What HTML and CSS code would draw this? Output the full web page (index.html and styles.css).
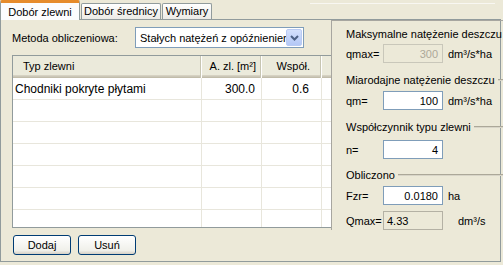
FILE: index.html
```html
<!DOCTYPE html>
<html lang="pl">
<head>
<meta charset="utf-8">
<link rel="stylesheet" href="styles.css">
</head>
<body>
<div class="win">
  <div class="tabs">
    <div class="tab active">Dobór zlewni</div>
    <div class="tab t2">Dobór średnicy</div>
    <div class="tab t3">Wymiary</div>
    <div class="ghost"></div>
  </div>
  <div class="page">
    <div class="left">
      <div class="method">
        <span class="mlabel">Metoda obliczeniowa:</span>
        <div class="combo">
          <span class="combo-text">Stałych natężeń z opóźnieniem</span>
          <span class="combo-btn"><svg width="9" height="6" viewBox="0 0 9 6"><path d="M1 1 L4.5 4.5 L8 1" fill="none" stroke="#4D6185" stroke-width="2"/></svg></span>
        </div>
      </div>
      <div class="grid">
        <div class="row head">
          <div class="c c1">Typ zlewni</div>
          <div class="c c2">A. zl. [m²]</div>
          <div class="c c3">Współ.</div>
          <div class="c c4"></div>
        </div>
        <div class="row body">
          <div class="c c1">Chodniki pokryte płytami</div>
          <div class="c c2">300.0</div>
          <div class="c c3">0.6</div>
          <div class="c c4"></div>
        </div>
        <div class="row"><div class="c c1"></div><div class="c c2"></div><div class="c c3"></div><div class="c c4"></div></div>
        <div class="row"><div class="c c1"></div><div class="c c2"></div><div class="c c3"></div><div class="c c4"></div></div>
        <div class="row"><div class="c c1"></div><div class="c c2"></div><div class="c c3"></div><div class="c c4"></div></div>
        <div class="row"><div class="c c1"></div><div class="c c2"></div><div class="c c3"></div><div class="c c4"></div></div>
        <div class="row"><div class="c c1"></div><div class="c c2"></div><div class="c c3"></div><div class="c c4"></div></div>
        <div class="row"><div class="c c1"></div><div class="c c2"></div><div class="c c3"></div><div class="c c4"></div></div>
      </div>
      <div class="buttons">
        <button class="btn">Dodaj</button>
        <button class="btn">Usuń</button>
      </div>
    </div>
    <div class="right">
      <div class="ghead g1"><span>Maksymalne natężenie deszczu</span><i class="gline"></i></div>
      <div class="frow r1"><span class="flabel">qmax=</span><span class="field disabled">300</span><span class="unit">dm³/s*ha</span></div>
      <div class="ghead g2"><span>Miarodajne natężenie deszczu</span><i class="gline"></i></div>
      <div class="frow r2"><span class="flabel">qm=</span><span class="field">100</span><span class="unit">dm³/s*ha</span></div>
      <div class="ghead g3"><span>Współczynnik typu zlewni</span><i class="gline"></i></div>
      <div class="frow r3"><span class="flabel">n=</span><span class="field">4</span></div>
      <div class="ghead g4"><span>Obliczono</span><i class="gline"></i></div>
      <div class="frow r4"><span class="flabel">Fzr=</span><span class="field">0.0180</span><span class="unit">ha</span></div>
      <div class="frow r5"><span class="flabel">Qmax=</span><span class="field result">4.33</span><span class="unit u2">dm³/s</span></div>
    </div>
  </div>
</div>
</body>
</html>
```
FILE: styles.css
```css
* { box-sizing: border-box; }
html, body { margin: 0; padding: 0; }
body {
  background: #ECE9D8;
  font-family: "Liberation Sans", Arial, sans-serif;
  font-size: 11px;
  color: #000;
}
.win {
  width: 503px;
  height: 265px;
  background: #ECE9D8;
}
.tabs {
  display: flex;
  align-items: flex-start;
  height: 20px;
  position: relative;
  z-index: 2;
}
.tab {
  height: 16px;
  margin-top: 3px;
  border: 1px solid #919B9C;
  border-bottom: none;
  border-radius: 2px 2px 0 0;
  background: linear-gradient(#FFFFFF, #ECEBE6);
  display: flex;
  align-items: center;
  justify-content: center;
  line-height: 13px;
  white-space: nowrap;
}
.tab.active {
  width: 80px;
  height: 20px;
  margin-top: 0;
  background: #FCFCFE;
  border-top: 3px solid #E68B2C;
  padding-top: 1px;
}
.tab.t2 { width: 80px; margin-left: 1px; }
.tab.t3 { width: 50px; margin-left: 1px; }
.ghost {
  width: 185px;
  height: 1px;
  margin: 3px 8px 0 auto;
  background: #F8F7F2;
}
.page {
  width: 501px;
  height: 243px;
  margin-top: -1px;
  border: 1px solid #919B9C;
  background: #ECE9D8;
  display: flex;
}
.left {
  width: 330px;
  padding-left: 11px;
  display: flex;
  flex-direction: column;
}
.method {
  display: flex;
  align-items: center;
  margin-top: 7px;
  height: 21px;
}
.mlabel { width: 123px; }
.combo {
  width: 169px;
  height: 21px;
  border: 1px solid #7F9DB9;
  background: #fff;
  display: flex;
  align-items: center;
  overflow: hidden;
}
.combo-text {
  flex: 1;
  padding-left: 4px;
  white-space: nowrap;
  overflow: hidden;
}
.combo-btn {
  width: 16px;
  height: 17px;
  margin-right: 1px;
  border: 1px solid #B9CBF3;
  border-radius: 2px;
  background: linear-gradient(#D4E0FC, #B4C8F6);
  display: flex;
  align-items: center;
  justify-content: center;
}
.grid {
  margin-top: 7px;
  width: 320px;
  height: 173px;
  border: 1px solid #919B9C;
  background: #fff;
  overflow: hidden;
}
.row {
  display: flex;
  height: 22px;
  border-bottom: 1px solid #E8E6DC;
}
.row.body { font-size: 12px; }
.row.head {
  height: 22px;
  background: #EBEADB;
  border-bottom: none;
  box-shadow: inset 0 -1px 0 #C1BCA9, inset 0 -2px 0 #CBC7B8, inset 0 -3px 0 #D6D2C2;
}
.c {
  height: 100%;
  display: flex;
  align-items: center;
  border-right: 1px solid #E8E6DC;
  white-space: nowrap;
}
.c1 { width: 189px; padding-left: 2px; }
.c2 { width: 60px; justify-content: flex-end; padding-right: 6px; }
.c3 { width: 60px; justify-content: flex-end; padding-right: 12px; }
.c4 { flex: 1; border-right: none; }
.head .c {
  border-right: none;
  position: relative;
  padding-bottom: 3px;
}
.head .c1 { padding-left: 10px; }
.head .c2 { padding-right: 6px; }
.head .c3 { padding-right: 12px; }
.head .c1, .head .c2, .head .c3 {
  box-shadow: inset -1px 0 0 #FFFFFF, inset -2px 0 0 #C7C5B2;
  background-clip: content-box;
}
.buttons {
  display: flex;
  gap: 7px;
  margin-top: 7px;
  padding-left: 1px;
}
.btn {
  width: 58px;
  height: 20px;
  border: 1px solid #003C74;
  border-radius: 3px;
  background: linear-gradient(#FFFFFF, #F0F0EA 80%, #D6D0C5);
  font-family: "Liberation Sans", Arial, sans-serif;
  font-size: 11px;
  color: #000;
  padding: 0;
}
.right {
  flex: 1;
  height: 210px;
  border-left: 1px solid #A7A6A0;
  border-top: 1px solid #A7A6A0;
  padding-left: 14px;
  display: flex;
  flex-direction: column;
}
.ghead {
  display: flex;
  align-items: center;
  height: 14px;
  white-space: nowrap;
}
.gline {
  flex: 1;
  margin-left: 3px;
  height: 2px;
  border-top: 1px solid #ACA899;
  border-bottom: 1px solid #D8D5C8;
}
.g1 { margin-top: 6px; }
.g2 { margin-top: 10px; }
.g3 { margin-top: 10px; }
.g4 { margin-top: 9px; }
.frow {
  display: flex;
  align-items: center;
  height: 19px;
}
.r1 { margin-top: 4px; }
.r2 { margin-top: 5px; }
.r3 { margin-top: 7px; }
.r4 { margin-top: 5px; }
.r5 { margin-top: 6px; }
.flabel { width: 37px; }
.field {
  width: 60px;
  height: 19px;
  border: 1px solid #7F9DB9;
  background: #fff;
  display: flex;
  align-items: center;
  justify-content: flex-end;
  padding-right: 4px;
}
.field.disabled {
  background: #ECE9D8;
  border-color: #C9C7BA;
  color: #ACA899;
}
.field.result {
  background: #ECE9D8;
  border-color: #B4B1A4;
  justify-content: flex-start;
  padding-left: 3px;
}
.unit { margin-left: 5px; }
.unit.u2 { margin-left: 15px; }
```
